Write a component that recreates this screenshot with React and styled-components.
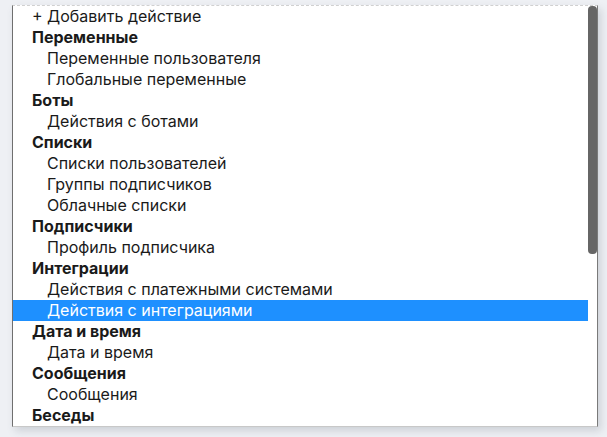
import React from 'react';
import styled, { createGlobalStyle } from 'styled-components';

const GlobalStyle = createGlobalStyle`
    html, body {
        margin: 0;
        padding: 0;
        background: #eef0f4;
        font-family: Inter, "Noto Sans", sans-serif;
    }
`;

const groups = [
    { title: 'Переменные', items: ['Переменные пользователя', 'Глобальные переменные'] },
    { title: 'Боты', items: ['Действия с ботами'] },
    { title: 'Списки', items: ['Списки пользователей', 'Группы подписчиков', 'Облачные списки'] },
    { title: 'Подписчики', items: ['Профиль подписчика'] },
    { title: 'Интеграции', items: ['Действия с платежными системами', 'Действия с интеграциями'] },
    { title: 'Дата и время', items: ['Дата и время'] },
    { title: 'Сообщения', items: ['Сообщения'] },
    { title: 'Беседы', items: [] },
];

function App() {
    const selected = 'Действия с интеграциями';
    return (
        <>
            <GlobalStyle />
            <Page>
                <ListBox>
                    <Options>
                        <Row $kind="first">+ Добавить действие</Row>
                        {groups.map((g) => (
                            <React.Fragment key={g.title}>
                                <Row $kind="group">{g.title}</Row>
                                {g.items.map((item) => (
                                    <Row key={item} $kind="option" $active={item === selected}>
                                        {item}
                                    </Row>
                                ))}
                            </React.Fragment>
                        ))}
                    </Options>
                    <Track>
                        <Thumb />
                    </Track>
                </ListBox>
            </Page>
        </>
    );
}

const Page = styled.div`
    width: 607px;
    height: 437px;
    padding: 5px 0 0 12px;
    box-sizing: border-box;
`;

const ListBox = styled.div`
    width: 586px;
    height: 422px;
    box-sizing: border-box;
    display: flex;
    background: #fff;
    border-left: 1px solid #6f6f6f;
    border-right: 1px solid #7a7a7a;
    border-top: 1px dashed #d0d0d0;
    border-bottom: 1px solid #c8c8c8;
    box-shadow: 3px 4px 8px rgba(60, 70, 90, 0.18);
    overflow: hidden;
`;

const Options = styled.div`
    flex: 1;
    min-width: 0;
`;

const Track = styled.div`
    width: 9px;
    flex-shrink: 0;
    background: #fff;
`;

const Thumb = styled.div`
    height: 248px;
    background: #666;
    border-radius: 4px;
`;

const Row = styled.div`
    height: 21px;
    line-height: 21px;
    font-size: 16px;
    white-space: nowrap;
    padding-left: ${(p) => (p.$kind === 'option' ? '34px' : '19px')};
    font-weight: ${(p) => (p.$kind === 'group' ? 700 : 400)};
    background: ${(p) => (p.$active ? '#1e90ff' : 'transparent')};
    color: ${(p) => (p.$active ? '#fff' : '#1a1a1a')};
`;

export default App;
